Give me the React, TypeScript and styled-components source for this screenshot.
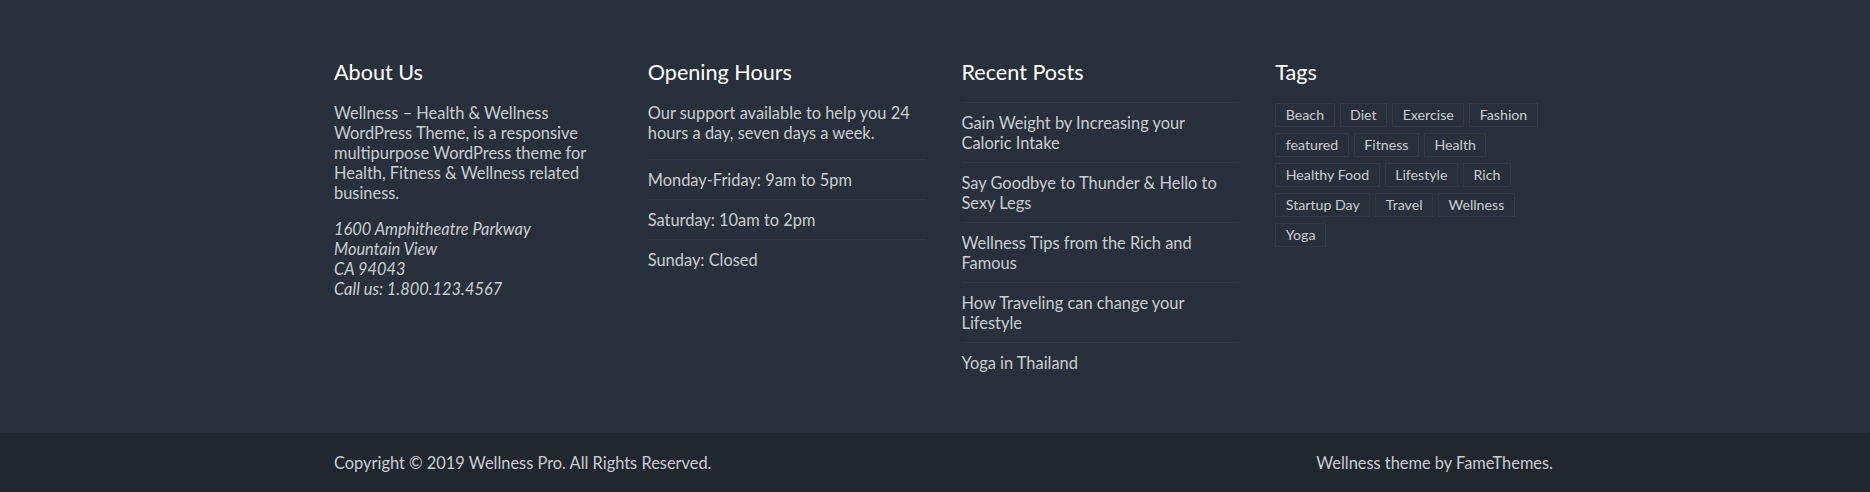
import React from "react";
import styled, { createGlobalStyle } from "styled-components";

const FONT = `"Lato", "Open Sans", "Noto Sans", sans-serif`;

const Global = createGlobalStyle`
  html, body { margin: 0; padding: 0; background: #28313b; }
  body { font-family: ${FONT}; font-size: 16.4px; color: #c9cdd2; }
  * { box-sizing: border-box; }
`;

const Footer = styled.footer`
  background: #28313b;
  width: 1870px;
`;

const Widgets = styled.div`
  padding: 57px 0 51px 334px;
`;

const Grid = styled.div`
  width: 1219px;
  display: grid;
  grid-template-columns: repeat(4, 1fr);
  column-gap: 36px;
  align-items: start;
`;

const Column = styled.section`
  display: flex;
  flex-direction: column;
`;

const Heading = styled.h2`
  margin: 0 0 16px;
  font-size: 21.6px;
  line-height: 30px;
  font-weight: 400;
  color: #ffffff;
`;

const Text = styled.p<{ $italic?: boolean }>`
  margin: 0 0 16px;
  font-size: 16.4px;
  line-height: 20px;
  color: #c9cdd2;
  font-style: ${(p) => (p.$italic ? "italic" : "normal")};
`;

const List = styled.ul<{ $offset?: number }>`
  list-style: none;
  margin: ${(p) => (p.$offset ? `-${p.$offset}px` : "0")} 0 0;
  padding: 0;
`;

const Item = styled.li<{ $narrow?: boolean }>`
  border-top: 1px solid #313a44;
  padding: 10px ${(p) => (p.$narrow ? "12px" : "0")} 9px 0;
  font-size: 16.4px;
  line-height: 20px;
  color: #c9cdd2;
`;

const TagCloud = styled.div`
  display: flex;
  flex-wrap: wrap;
  gap: 6px 5px;
`;

const Tag = styled.a`
  display: inline-block;
  border: 1px solid #333c46;
  padding: 0 9.5px;
  height: 24px;
  line-height: 22px;
  font-size: 14.2px;
  color: #c9cdd2;
  text-decoration: none;
`;

const BottomBar = styled.div`
  background: #21272f;
  height: 60px;
  padding: 0 317px 0 334px;
  display: flex;
  align-items: center;
  justify-content: space-between;
  font-size: 16.4px;
  line-height: 20px;
  color: #c9cdd2;
`;

const hours = ["Monday-Friday: 9am to 5pm", "Saturday: 10am to 2pm", "Sunday: Closed"];
const posts = [
  "Gain Weight by Increasing your Caloric Intake",
  "Say Goodbye to Thunder & Hello to Sexy Legs",
  "Wellness Tips from the Rich and Famous",
  "How Traveling can change your Lifestyle",
  "Yoga in Thailand",
];
const tags = [
  "Beach", "Diet", "Exercise", "Fashion", "featured", "Fitness", "Health",
  "Healthy Food", "Lifestyle", "Rich", "Startup Day", "Travel", "Wellness", "Yoga",
];

export default function App() {
  return (
    <>
      <Global />
      <Footer>
        <Widgets>
          <Grid>
            <Column>
              <Heading>About Us</Heading>
              <Text>
                Wellness – Health &amp; Wellness WordPress Theme, is a responsive multipurpose
                WordPress theme for Health, Fitness &amp; Wellness related business.
              </Text>
              <Text $italic>
                1600 Amphitheatre Parkway
                <br />
                Mountain View
                <br />
                CA 94043
                <br />
                Call us: 1.800.123.4567
              </Text>
            </Column>
            <Column>
              <Heading>Opening Hours</Heading>
              <Text>Our support available to help you 24 hours a day, seven days a week.</Text>
              <List>
                {hours.map((h) => (
                  <Item key={h}>{h}</Item>
                ))}
              </List>
            </Column>
            <Column>
              <Heading>Recent Posts</Heading>
              <List $offset={1}>
                {posts.map((p) => (
                  <Item key={p} $narrow>
                    {p}
                  </Item>
                ))}
              </List>
            </Column>
            <Column>
              <Heading>Tags</Heading>
              <TagCloud>
                {tags.map((t) => (
                  <Tag key={t} href="#">
                    {t}
                  </Tag>
                ))}
              </TagCloud>
            </Column>
          </Grid>
        </Widgets>
        <BottomBar>
          <span>Copyright © 2019 Wellness Pro. All Rights Reserved.</span>
          <span>Wellness theme by FameThemes.</span>
        </BottomBar>
      </Footer>
    </>
  );
}
